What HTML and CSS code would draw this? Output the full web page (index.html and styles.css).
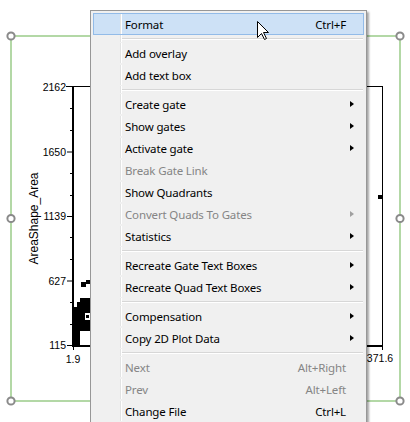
FILE: index.html
```html
<!DOCTYPE html>
<html>
<head>
<meta charset="utf-8">
<title>Plot menu</title>
<link rel="stylesheet" href="styles.css">
</head>
<body>
<svg class="plot" width="410" height="422" viewBox="0 0 410 422">
  <g class="sel">
    <line x1="11" y1="36" x2="400" y2="36"/>
    <line x1="11" y1="401" x2="400" y2="401"/>
    <line x1="11" y1="36" x2="11" y2="401"/>
    <line x1="400" y1="36" x2="400" y2="401"/>
  </g>
  <g class="handle">
    <circle cx="11" cy="36" r="3.6"/>
    <circle cx="11" cy="218.5" r="3.6"/>
    <circle cx="11" cy="401" r="3.6"/>
    <circle cx="400" cy="36" r="3.6"/>
    <circle cx="400" cy="218.5" r="3.6"/>
    <circle cx="400" cy="401" r="3.6"/>
    <circle cx="205.5" cy="36" r="3.6"/>
    <circle cx="205.5" cy="401" r="3.6"/>
  </g>
  <g class="frame">
    <rect x="66" y="86" width="317" height="1"/>
    <rect x="382" y="86" width="1" height="260"/>
    <rect x="72" y="86" width="2" height="261"/>
    <rect x="72" y="345" width="311" height="2"/>
    <rect x="67" y="151.5" width="5" height="1"/>
    <rect x="67" y="216" width="5" height="1"/>
    <rect x="67" y="280.5" width="5" height="1"/>
    <rect x="67" y="345" width="5" height="1"/>
    <rect x="70" y="108" width="2" height="1"/>
    <rect x="70" y="130" width="2" height="1"/>
    <rect x="70" y="173" width="2" height="1"/>
    <rect x="70" y="195" width="2" height="1"/>
    <rect x="70" y="237" width="2" height="1"/>
    <rect x="70" y="259" width="2" height="1"/>
    <rect x="70" y="302" width="2" height="1"/>
    <rect x="70" y="324" width="2" height="1"/>
    <rect x="73" y="347" width="1" height="3"/>
    <rect x="382" y="347" width="1" height="3"/>
  </g>
  <g class="data">
    <path d="M80,298 H90 V331 H80 V345 H74 V307 H77 V302 H80 Z"/>
    <rect x="81" y="282" width="5" height="5"/>
    <rect x="86" y="280" width="4" height="4"/>
    <rect x="378" y="195" width="4" height="4"/>
  </g>
  <rect class="hole" x="85" y="313" width="5" height="7"/>
  <rect x="86" y="315" width="3" height="3"/>
  <g class="ticklbl">
    <text x="66" y="90.8" text-anchor="end">2162</text>
    <text x="66" y="155.8" text-anchor="end">1650</text>
    <text x="66" y="220.3" text-anchor="end">1139</text>
    <text x="66" y="284.8" text-anchor="end">627</text>
    <text x="66" y="349.3" text-anchor="end">115</text>
    <text x="73" y="362.8" text-anchor="middle">1.9</text>
    <text x="380" y="362.3" text-anchor="middle">371.6</text>
  </g>
  <text class="ylabel" transform="translate(37.5,218.5) rotate(-90)" text-anchor="middle">AreaShape_Area</text>
</svg>

<div class="menu">
  <div class="item hover"><span class="gut"></span><span class="label">Format</span><span class="key">Ctrl+F</span><span class="arr"></span></div>
  <div class="sep"><span class="gut"></span><span class="line"></span></div>
  <div class="item"><span class="gut"></span><span class="label">Add overlay</span><span class="arr"></span></div>
  <div class="item"><span class="gut"></span><span class="label">Add text box</span><span class="arr"></span></div>
  <div class="sep"><span class="gut"></span><span class="line"></span></div>
  <div class="item"><span class="gut"></span><span class="label">Create gate</span><span class="arr sub"></span></div>
  <div class="item"><span class="gut"></span><span class="label">Show gates</span><span class="arr sub"></span></div>
  <div class="item"><span class="gut"></span><span class="label">Activate gate</span><span class="arr sub"></span></div>
  <div class="item off"><span class="gut"></span><span class="label">Break Gate Link</span><span class="arr"></span></div>
  <div class="item"><span class="gut"></span><span class="label">Show Quadrants</span><span class="arr"></span></div>
  <div class="item off"><span class="gut"></span><span class="label">Convert Quads To Gates</span><span class="arr sub"></span></div>
  <div class="item"><span class="gut"></span><span class="label">Statistics</span><span class="arr sub"></span></div>
  <div class="sep"><span class="gut"></span><span class="line"></span></div>
  <div class="item"><span class="gut"></span><span class="label">Recreate Gate Text Boxes</span><span class="arr sub"></span></div>
  <div class="item"><span class="gut"></span><span class="label">Recreate Quad Text Boxes</span><span class="arr sub"></span></div>
  <div class="sep"><span class="gut"></span><span class="line"></span></div>
  <div class="item"><span class="gut"></span><span class="label">Compensation</span><span class="arr sub"></span></div>
  <div class="item"><span class="gut"></span><span class="label">Copy 2D Plot Data</span><span class="arr sub"></span></div>
  <div class="sep"><span class="gut"></span><span class="line"></span></div>
  <div class="item off"><span class="gut"></span><span class="label">Next</span><span class="key">Alt+Right</span><span class="arr"></span></div>
  <div class="item off"><span class="gut"></span><span class="label">Prev</span><span class="key">Alt+Left</span><span class="arr"></span></div>
  <div class="item"><span class="gut"></span><span class="label">Change File</span><span class="key">Ctrl+L</span><span class="arr"></span></div>
</div>

<svg class="cursor" width="13" height="20" viewBox="0 0 13 20">
  <path d="M0.5,0.5 L0.5,16.5 L4.5,12.5 L7.5,18.5 L9.5,17.5 L6.5,11.5 L11.5,11.5 Z"/>
</svg>
</body>
</html>
```

FILE: styles.css
```css
html, body {
  margin: 0;
  padding: 0;
  background: #ffffff;
}

body {
  width: 410px;
  height: 422px;
  overflow: hidden;
  position: relative;
  font-family: "Noto Sans", "Open Sans", sans-serif;
}

.plot {
  display: block;
}

.sel line {
  stroke: #b3d8a6;
  stroke-width: 2;
}

.handle circle {
  fill: #ffffff;
  stroke: #8a8a8a;
  stroke-width: 2;
}

.frame rect,
.data path,
.data rect {
  fill: #000000;
}

.hole {
  fill: #ffffff;
}

.ticklbl text {
  font-family: "Liberation Sans", Arial, sans-serif;
  font-size: 10.5px;
  fill: #000000;
}

.ylabel {
  font-family: "Liberation Sans", Arial, sans-serif;
  font-size: 12px;
  fill: #000000;
}

.menu {
  position: absolute;
  left: 90px;
  top: 10px;
  width: 277px;
  box-sizing: border-box;
  border: 1px solid #979797;
  background: #f0f0f0;
  padding: 2px 2px 6px;
  box-shadow: 2px 2px 2px rgba(0, 0, 0, 0.35);
  font-size: 11.5px;
  letter-spacing: -0.15px;
  color: #000000;
}

.item {
  display: flex;
  align-items: center;
  height: 22px;
  box-sizing: border-box;
  border: 1px solid transparent;
  white-space: nowrap;
}

.item.hover {
  background: #cde1f6;
  border-color: #92bbe8;
}

.item.off {
  color: #858585;
}

.gut {
  flex: none;
  align-self: stretch;
  width: 26px;
  border-right: 1px solid #e2e3e3;
  box-shadow: 1px 0 0 #ffffff;
}

.label {
  flex: 1;
  padding-left: 4px;
}

.key {
  flex: none;
}

.arr {
  flex: none;
  width: 17px;
  display: flex;
  align-items: center;
}

.arr.sub::before {
  content: "";
  display: block;
  margin-left: 4px;
  width: 0;
  height: 0;
  border-left: 4px solid #000000;
  border-top: 3.5px solid transparent;
  border-bottom: 3.5px solid transparent;
}

.item.off .arr.sub::before {
  border-left-color: #a0a0a0;
}

.sep {
  display: flex;
  height: 7px;
  box-sizing: border-box;
  border-left: 1px solid transparent;
  border-right: 1px solid transparent;
}

.sep .line {
  flex: 1;
  margin-top: 3px;
  height: 0;
  border-top: 1px solid #d7d7d7;
  border-bottom: 1px solid #ffffff;
  margin-left: 1px;
}

.cursor {
  position: absolute;
  left: 257px;
  top: 21px;
}

.cursor path {
  fill: #ffffff;
  stroke: #000000;
  stroke-width: 1;
}
```
